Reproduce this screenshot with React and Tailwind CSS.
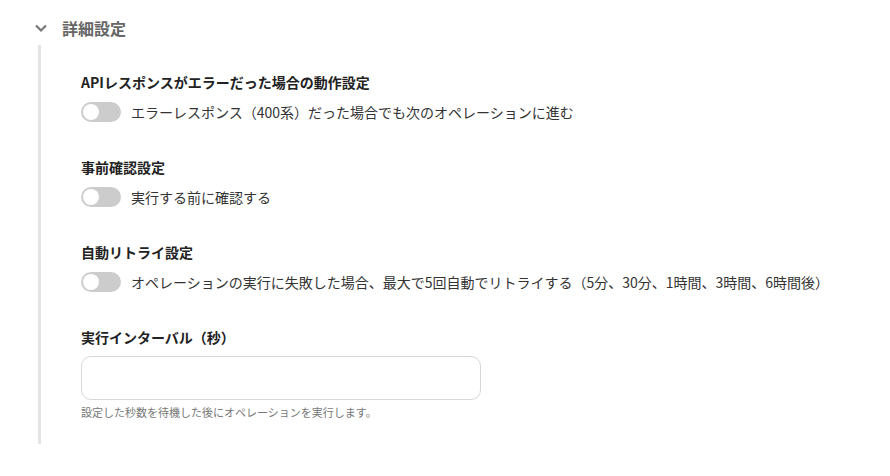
import React from "react";

function Toggle() {
  return (
    <div className="relative w-[40px] h-[20px] rounded-full bg-[#cccccc] shrink-0">
      <div className="absolute left-[2px] top-[2px] w-[16px] h-[16px] rounded-full bg-white" />
    </div>
  );
}

function ToggleSection({ title, label }) {
  return (
    <div className="flex flex-col gap-[10px]">
      <div className="text-[14px] leading-[20px] font-bold text-[#222222]">{title}</div>
      <div className="flex items-center gap-[10px]">
        <Toggle />
        <span className="text-[14px] leading-[20px] text-[#333333]">{label}</span>
      </div>
    </div>
  );
}

export default function App() {
  return (
    <div
      className="w-[890px] h-[476px] bg-white pt-[16px]"
      style={{ fontFamily: '"Noto Sans CJK JP", "Noto Sans", sans-serif' }}
    >
      <div className="pl-[34px] flex items-center h-[24px]">
        <svg width="14" height="14" viewBox="0 0 14 14" className="shrink-0">
          <path d="M2 4.5 L7 9.5 L12 4.5" fill="none" stroke="#777777" strokeWidth="2.2" />
        </svg>
        <span className="ml-[14px] text-[16px] leading-[24px] font-bold text-[#666666]">
          詳細設定
        </span>
      </div>
      <div className="mt-[5px] ml-[38px] border-l-[3px] border-[#e3e3e3] pl-[40px] h-[399px] box-border">
        <div className="pt-[27px] flex flex-col gap-[35px]">
          <ToggleSection
            title="APIレスポンスがエラーだった場合の動作設定"
            label="エラーレスポンス（400系）だった場合でも次のオペレーションに進む"
          />
          <ToggleSection title="事前確認設定" label="実行する前に確認する" />
          <ToggleSection
            title="自動リトライ設定"
            label="オペレーションの実行に失敗した場合、最大で5回自動でリトライする（5分、30分、1時間、3時間、6時間後）"
          />
          <div className="flex flex-col">
            <div className="text-[14px] leading-[20px] font-bold text-[#222222]">実行インターバル（秒）</div>
            <input
              type="text"
              className="mt-[9px] w-[400px] h-[44px] rounded-[10px] border border-[#d4d7dc] outline-none px-3"
            />
            <div className="mt-[4px] text-[11px] leading-[16px] text-[#777777]">
              設定した秒数を待機した後にオペレーションを実行します。
            </div>
          </div>
        </div>
      </div>
    </div>
  );
}
